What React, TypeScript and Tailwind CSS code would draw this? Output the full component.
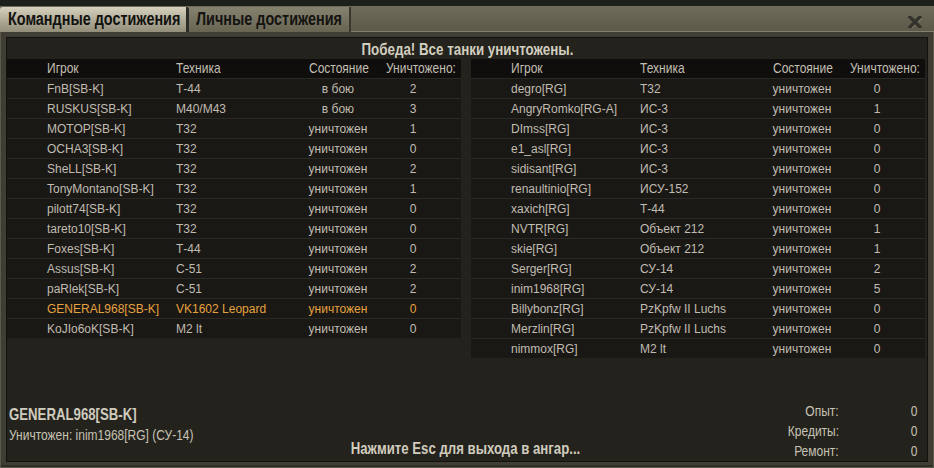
import React from "react";

type Row = { name: string; tank: string; state: string; kills: string; me?: boolean };

const left: Row[] = [
  { name: "FnB[SB-K]", tank: "Т-44", state: "в бою", kills: "2" },
  { name: "RUSKUS[SB-K]", tank: "M40/M43", state: "в бою", kills: "3" },
  { name: "MOTOP[SB-K]", tank: "T32", state: "уничтожен", kills: "1" },
  { name: "OCHA3[SB-K]", tank: "T32", state: "уничтожен", kills: "0" },
  { name: "SheLL[SB-K]", tank: "T32", state: "уничтожен", kills: "2" },
  { name: "TonyMontano[SB-K]", tank: "T32", state: "уничтожен", kills: "1" },
  { name: "pilott74[SB-K]", tank: "T32", state: "уничтожен", kills: "0" },
  { name: "tareto10[SB-K]", tank: "T32", state: "уничтожен", kills: "0" },
  { name: "Foxes[SB-K]", tank: "Т-44", state: "уничтожен", kills: "0" },
  { name: "Assus[SB-K]", tank: "С-51", state: "уничтожен", kills: "2" },
  { name: "paRlek[SB-K]", tank: "С-51", state: "уничтожен", kills: "2" },
  { name: "GENERAL968[SB-K]", tank: "VK1602 Leopard", state: "уничтожен", kills: "0", me: true },
  { name: "KoJIo6oK[SB-K]", tank: "M2 lt", state: "уничтожен", kills: "0" },
];

const right: Row[] = [
  { name: "degro[RG]", tank: "T32", state: "уничтожен", kills: "0" },
  { name: "AngryRomko[RG-A]", tank: "ИС-3", state: "уничтожен", kills: "1" },
  { name: "DImss[RG]", tank: "ИС-3", state: "уничтожен", kills: "0" },
  { name: "e1_asl[RG]", tank: "ИС-3", state: "уничтожен", kills: "0" },
  { name: "sidisant[RG]", tank: "ИС-3", state: "уничтожен", kills: "0" },
  { name: "renaultinio[RG]", tank: "ИСУ-152", state: "уничтожен", kills: "0" },
  { name: "xaxich[RG]", tank: "Т-44", state: "уничтожен", kills: "0" },
  { name: "NVTR[RG]", tank: "Объект 212", state: "уничтожен", kills: "1" },
  { name: "skie[RG]", tank: "Объект 212", state: "уничтожен", kills: "1" },
  { name: "Serger[RG]", tank: "СУ-14", state: "уничтожен", kills: "2" },
  { name: "inim1968[RG]", tank: "СУ-14", state: "уничтожен", kills: "5" },
  { name: "Billybonz[RG]", tank: "PzKpfw II Luchs", state: "уничтожен", kills: "0" },
  { name: "Merzlin[RG]", tank: "PzKpfw II Luchs", state: "уничтожен", kills: "0" },
  { name: "nimmox[RG]", tank: "M2 lt", state: "уничтожен", kills: "0" },
];

const sans = "font-['Liberation_Sans',Arial,sans-serif]";

/* narrow text: Arial-width font squeezed horizontally */
function NL({ children }: { children: React.ReactNode }) {
  return <span className="inline-block whitespace-nowrap scale-x-[0.8] origin-left">{children}</span>;
}
function NC({ children }: { children: React.ReactNode }) {
  return <span className="inline-block whitespace-nowrap scale-x-[0.8] origin-center">{children}</span>;
}
function NR({ children }: { children: React.ReactNode }) {
  return <span className="inline-block whitespace-nowrap scale-x-[0.8] origin-right">{children}</span>;
}

function Table({ rows }: { rows: Row[] }) {
  return (
    <div className="w-[454px] shrink-0 flex flex-col">
      <div className={`h-[19px] bg-[#0f0e0c] flex items-center text-[15px] text-[#c2beb2] ${sans}`}>
        <div className="w-[40px] shrink-0" />
        <div className="w-[129px] shrink-0"><NL>Игрок</NL></div>
        <div className="w-[112px] shrink-0"><NL>Техника</NL></div>
        <div className="w-[81px] shrink-0 text-right"><NR>Состояние</NR></div>
        <div className="w-[17px] shrink-0" />
        <div className="flex-1 min-w-0"><NL>Уничтожено:</NL></div>
      </div>
      <div className="flex flex-col gap-[1px] bg-[#2b2925] pt-[1px]">
        {rows.map((r, i) => (
          <div
            key={i}
            className={`h-[19px] bg-[#191815] flex items-center text-[12px] ${sans} ${
              r.me ? "text-[#e6a23e]" : "text-[#c0bcb1]"
            }`}
          >
            <div className="w-[40px] shrink-0" />
            <div className="w-[129px] shrink-0 whitespace-nowrap">{r.name}</div>
            <div className="w-[112px] shrink-0 whitespace-nowrap">{r.tank}</div>
            <div className="w-[100px] shrink-0 text-center">{r.state}</div>
            <div className="w-[50px] shrink-0 text-center">{r.kills}</div>
          </div>
        ))}
      </div>
    </div>
  );
}

export default function App() {
  return (
    <div className={`w-[934px] h-[468px] overflow-hidden bg-[linear-gradient(180deg,#1d1f1a,#12130f)] flex flex-col pt-[6px] ${sans}`}>
      {/* tab strip */}
      <div className="h-[26px] flex bg-[linear-gradient(180deg,#6e6b5a,#5c5a4a)] border-b border-[#827f6b]">
        <div className="w-[189px] h-[25px] mt-[1px] rounded-t-[3px] bg-[linear-gradient(180deg,#d6d2bd,#aaa691_60%,#928e79)] border-r-[3px] border-[#2c2b25] flex items-center pl-[8px] text-[#111110] text-[18px] font-bold">
          <NL>Командные достижения</NL>
        </div>
        <div className="w-[162px] h-[25px] mt-[1px] bg-[linear-gradient(180deg,#858270,#676452)] border-r-2 border-[#3a3830] flex items-center pl-[7px] text-[#141310] text-[18px] font-bold">
          <NL>Личные достижения</NL>
        </div>
        <div className="flex-1" />
        <div className="w-[40px] flex items-center justify-center pl-[2px] pt-[6px]">
          <svg width="14" height="12" viewBox="0 0 14 12">
            <path d="M2 1 L12 11 M12 1 L2 11" stroke="#8a8773" strokeWidth="3.4" strokeLinecap="square" transform="translate(0.6,0.6)" />
            <path d="M2 1 L12 11 M12 1 L2 11" stroke="#33322b" strokeWidth="3.4" strokeLinecap="square" />
          </svg>
        </div>
      </div>
      {/* frame */}
      <div className="flex-1 bg-[#3f3d34] px-[5px] pt-[5px] pb-[5px] border-x border-b border-[#5b5949] shadow-[inset_0_-2px_0_#2e2d26]">
        <div className="h-full bg-[#24221d] border border-[#12110e] flex flex-col">
          <div className="h-[21px] pt-[2px] flex items-center justify-center text-[16.7px] font-bold text-[#d2cebf]">
            <NC>Победа! Все танки уничтожены.</NC>
          </div>
          <div className="flex gap-[10px] items-start">
            <Table rows={left} />
            <Table rows={right} />
          </div>
          <div className="flex-1" />
          <div className="flex items-end pl-[2px] text-[#c6c2b4]">
            <div className="w-[306px] flex flex-col pb-[16px]">
              <div className="text-[16.5px] font-bold leading-[21px] text-[#cfcbbd]"><NL>GENERAL968[SB-K]</NL></div>
              <div className="text-[15px] leading-[20px]"><NL>Уничтожен: inim1968[RG] (СУ-14)</NL></div>
            </div>
            <div className="w-[300px] pb-[3px] text-center text-[16.5px] font-bold leading-[20px] text-[#d0ccbd]">
              <NC>Нажмите Esc для выхода в ангар...</NC>
            </div>
            <div className="flex-1 flex flex-col text-[15px] leading-[20px] pr-[10px]">
              <div className="flex justify-end"><span className="w-[80px] text-right"><NR>Опыт:</NR></span><span className="w-[78px] text-right"><NR>0</NR></span></div>
              <div className="flex justify-end"><span className="w-[80px] text-right"><NR>Кредиты:</NR></span><span className="w-[78px] text-right"><NR>0</NR></span></div>
              <div className="flex justify-end"><span className="w-[80px] text-right"><NR>Ремонт:</NR></span><span className="w-[78px] text-right"><NR>0</NR></span></div>
            </div>
          </div>
        </div>
      </div>
    </div>
  );
}
